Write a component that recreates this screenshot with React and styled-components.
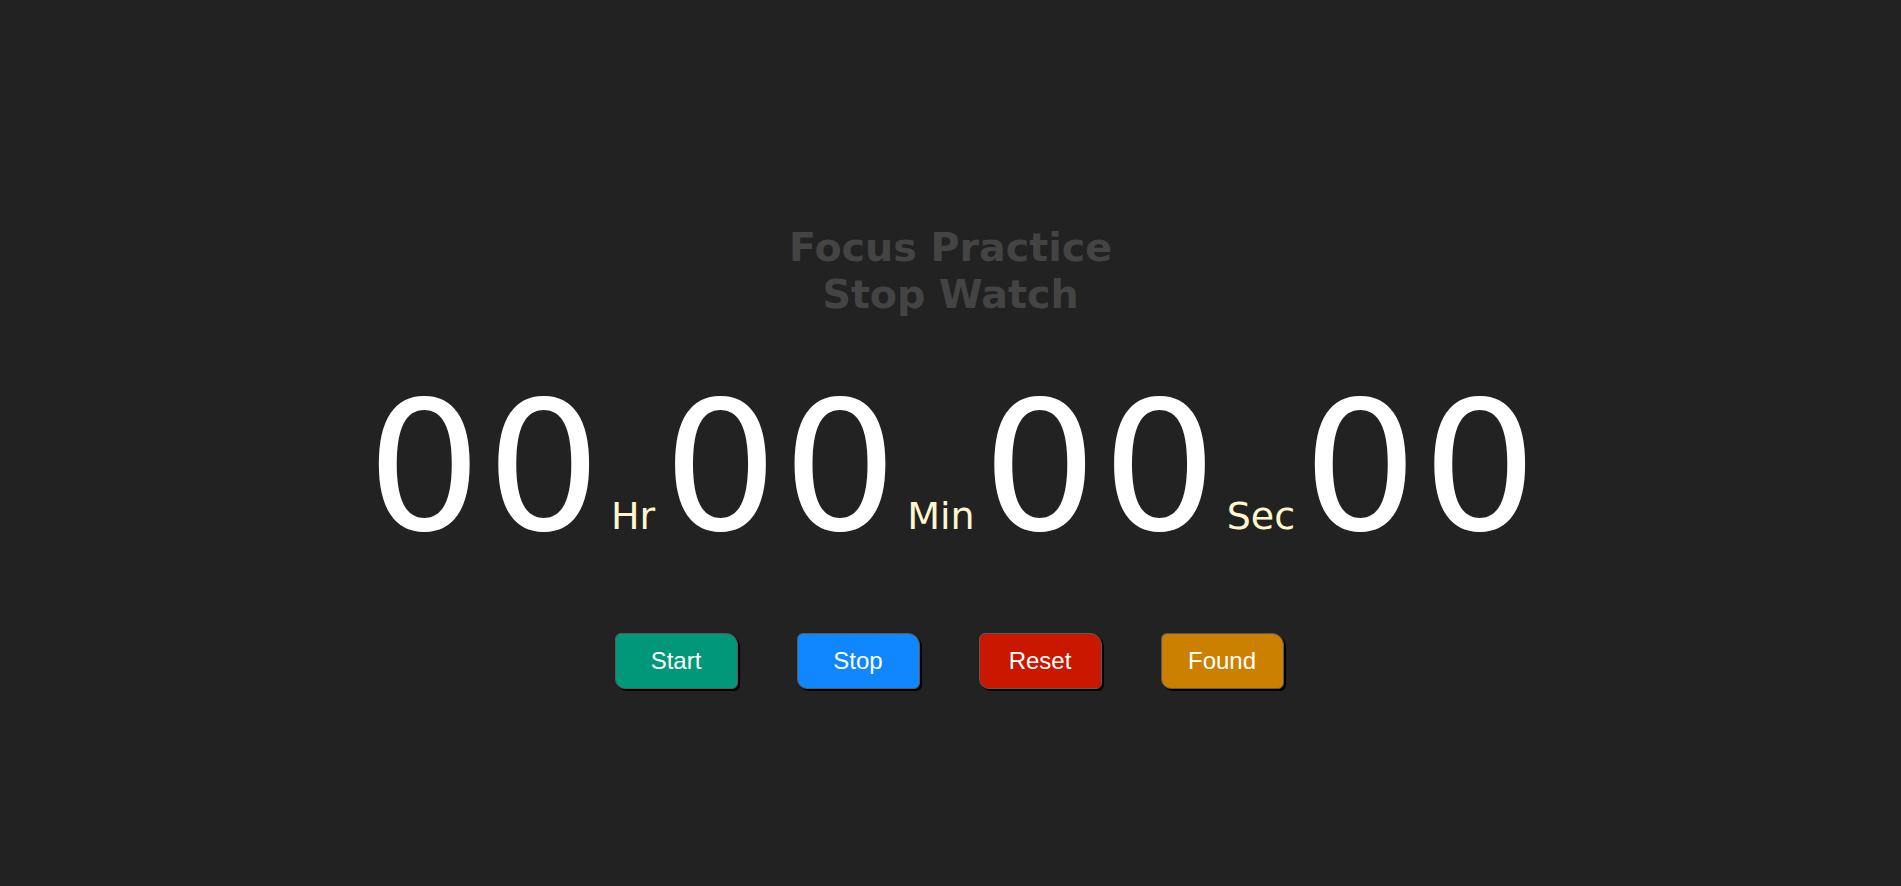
import React, { useState, useEffect, useRef } from 'react';
import styled, { createGlobalStyle } from 'styled-components';

const GlobalStyle = createGlobalStyle`
  html, body {
    margin: 0;
    padding: 0;
    background: #222222;
  }
`;

const Page = styled.div`
  min-height: 100vh;
  box-sizing: border-box;
  padding-top: 224px;
  display: flex;
  flex-direction: column;
  align-items: center;
  background: #222222;
`;

const Title = styled.h1`
  margin: 0;
  font-family: "DejaVu Sans", Verdana, sans-serif;
  font-weight: bold;
  font-size: 39.6px;
  line-height: 46.5px;
  color: #444444;
  text-align: center;
`;

const Clock = styled.div`
  margin-top: 45px;
  font-family: "DejaVu Sans", Verdana, sans-serif;
  white-space: nowrap;
  line-height: normal;
`;

const Digits = styled.span`
  font-size: 180px;
  letter-spacing: 5px;
  margin-left: 8px;
  color: #ffffff;
`;

const Unit = styled.span`
  font-size: 38px;
  margin-left: 5px;
  color: #fff8cf;
`;

const Buttons = styled.div`
  margin-top: 62px;
  margin-right: 3px;
  display: flex;
  gap: 59px;
`;

const Button = styled.button`
  width: 123px;
  height: 56px;
  box-sizing: border-box;
  padding: 0;
  border: 1px solid #5a5a5a;
  border-radius: 6px 12px 6px 10px;
  box-shadow: 2px 2px 0 #000000;
  background: ${p => p.$bg};
  color: #ffffff;
  font-family: "Liberation Sans", Arial, sans-serif;
  font-size: 24px;
  cursor: pointer;
`;

const pad = n => String(n).padStart(2, '0');

export default function App() {
  const [ticks, setTicks] = useState(0); // hundredths
  const [running, setRunning] = useState(false);
  const timer = useRef(null);

  useEffect(() => {
    if (!running) return;
    timer.current = setInterval(() => setTicks(t => t + 1), 10);
    return () => clearInterval(timer.current);
  }, [running]);

  const hr = Math.floor(ticks / 360000);
  const min = Math.floor(ticks / 6000) % 60;
  const sec = Math.floor(ticks / 100) % 60;
  const cs = ticks % 100;

  return (
    <>
      <GlobalStyle />
      <Page>
        <Title>
          Focus Practice
          <br />
          Stop Watch
        </Title>
        <Clock>
          <Digits>{pad(hr)}</Digits><Unit>Hr</Unit><Digits>{pad(min)}</Digits><Unit>Min</Unit><Digits>{pad(sec)}</Digits><Unit>Sec</Unit><Digits>{pad(cs)}</Digits>
        </Clock>
        <Buttons>
          <Button $bg="#009879" onClick={() => setRunning(true)}>Start</Button>
          <Button $bg="#1086ff" onClick={() => setRunning(false)}>Stop</Button>
          <Button $bg="#c91700" onClick={() => { setRunning(false); setTicks(0); }}>Reset</Button>
          <Button $bg="#cc8000" onClick={() => setRunning(false)}>Found</Button>
        </Buttons>
      </Page>
    </>
  );
}
